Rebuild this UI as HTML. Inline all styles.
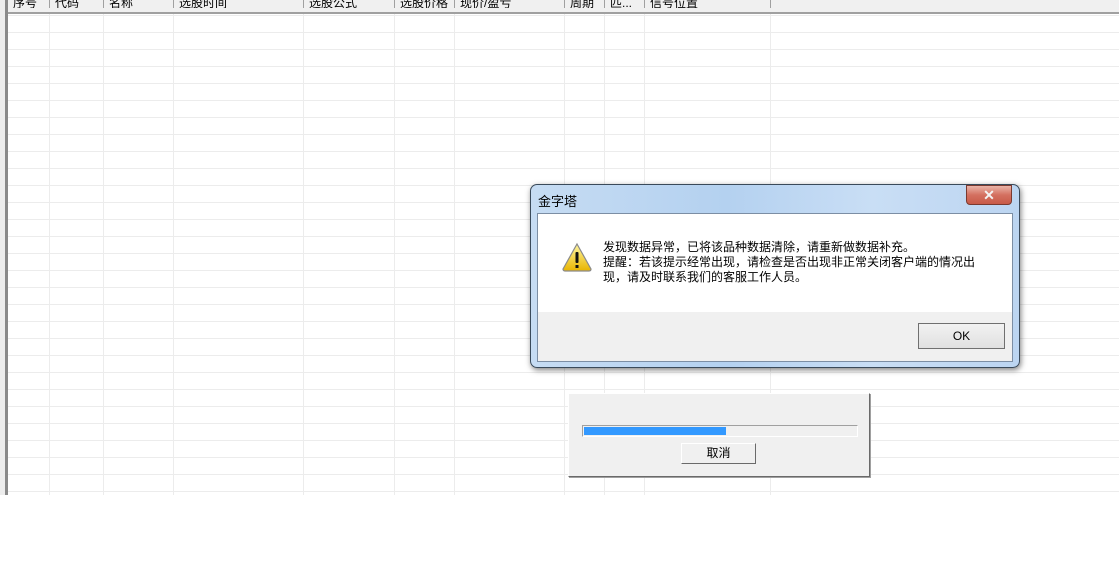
<!DOCTYPE html>
<html><head><meta charset="utf-8"><style>
*{margin:0;padding:0;box-sizing:border-box}
body{width:1119px;height:562px;background:#fff;position:relative;overflow:hidden;font-family:"Liberation Sans","Noto Sans CJK SC",sans-serif;font-size:12px;color:#000}
.abs{position:absolute}
#grid{left:8px;top:0;width:1111px;height:495px;background-color:#fff;
background-image:linear-gradient(#ececec 1px,transparent 1px);background-size:100% 17px;background-position:0 15px}
.vl{position:absolute;top:0;width:1px;height:495px;background:#ececec}
#hdr{left:8px;top:0;width:1111px;height:14px;background:#f0f0f0;border-bottom:2px solid #a0a0a0}
.hc{position:absolute;top:-4px;font-size:12px;color:#000;padding-left:5px;border-right:1px solid #a0a0a0;height:12px;line-height:14px;white-space:nowrap;overflow:hidden}
</style></head><body>
<div class="abs" style="left:0;top:0;width:5px;height:495px;background:#ededed"></div>
<div class="abs" style="left:5px;top:0;width:3px;height:495px;background:#8a8a8a"></div>
<div id="grid" class="abs">
<div class="vl" style="left:41px"></div><div class="vl" style="left:95px"></div><div class="vl" style="left:165px"></div><div class="vl" style="left:295px"></div><div class="vl" style="left:386px"></div><div class="vl" style="left:446px"></div><div class="vl" style="left:556px"></div><div class="vl" style="left:596px"></div><div class="vl" style="left:636px"></div><div class="vl" style="left:762px"></div>
</div>
<div id="hdr" class="abs">
<div class="hc" style="left:0;width:42px">序号</div>
<div class="hc" style="left:42px;width:54px">代码</div>
<div class="hc" style="left:96px;width:70px">名称</div>
<div class="hc" style="left:166px;width:130px">选股时间</div>
<div class="hc" style="left:296px;width:91px">选股公式</div>
<div class="hc" style="left:387px;width:60px">选股价格</div>
<div class="hc" style="left:447px;width:110px">现价/盈亏</div>
<div class="hc" style="left:557px;width:40px">周期</div>
<div class="hc" style="left:597px;width:40px">匹...</div>
<div class="hc" style="left:637px;width:126px">信号位置</div>
</div>

<!-- message box -->
<div class="abs" style="left:530px;top:184px;width:490px;height:184px;border-radius:7px;border:1px solid #3a4a5a;background:linear-gradient(90deg,#c6dcf3,#b4d1f0 40%,#c9def5 70%,#bcd5f1);box-shadow:1px 2px 6px rgba(0,0,0,.5)"></div>
<div class="abs" style="left:538px;top:191px;font-size:13px">金字塔</div>
<div class="abs" style="left:966px;top:185px;width:46px;height:20px;border-radius:0 0 4px 4px;border:1px solid #7a3a30;background:linear-gradient(#eab4a8,#d47060 50%,#c85a48);color:#f4f4f4;font-weight:bold;text-align:center;font-size:14px;line-height:18px">✕</div>
<div class="abs" style="left:537px;top:213px;width:476px;height:149px;border:1px solid #7c8ea4;background:#f0f0f0">
 <div style="height:98px;background:#fff"></div>
</div>
<svg class="abs" style="left:561px;top:242px" width="32" height="30" viewBox="0 0 32 30">
<defs><linearGradient id="g" x1="0" y1="0" x2="0" y2="1"><stop offset="0" stop-color="#fff6a0"/><stop offset="1" stop-color="#e8b400"/></linearGradient></defs>
<path d="M16 2 L30 27 Q30 29 28 29 L4 29 Q2 29 2 27 Z" fill="url(#g)" stroke="#8a8a8a" stroke-width="1.2"/>
<rect x="14.5" y="10" width="3" height="11" rx="1" fill="#111"/><rect x="14.5" y="23" width="3" height="3" fill="#111"/>
</svg>
<div class="abs" style="left:603px;top:240px;font-size:12px;line-height:15px;width:390px">发现数据异常，已将该品种数据清除，请重新做数据补充。<br>提醒：若该提示经常出现，请检查是否出现非正常关闭客户端的情况出<br>现，请及时联系我们的客服工作人员。</div>
<div class="abs" style="left:918px;top:323px;width:87px;height:26px;border:1px solid #707070;background:linear-gradient(#f2f2f2,#e0e0e0);text-align:center;line-height:24px;font-size:12px">OK</div>

<!-- progress -->
<div class="abs" style="left:568px;top:393px;width:302px;height:84px;background:#f0f0f0;border:1px solid;border-color:#fff #6a6a6a #6a6a6a #fff;box-shadow:1px 1px 0 #a0a0a0"></div>
<div class="abs" style="left:582px;top:425px;width:276px;height:12px;border:1px solid;border-color:#a0a0a0 #fff #fff #a0a0a0;background:#f0f0f0"><div style="margin:1px;width:142px;height:8px;background:#3399ff"></div></div>
<div class="abs" style="left:681px;top:443px;width:75px;height:21px;border:1px solid;border-color:#fff #6a6a6a #6a6a6a #fff;background:#f0f0f0;text-align:center;line-height:19px;font-size:12px">取消</div>
</body></html>
